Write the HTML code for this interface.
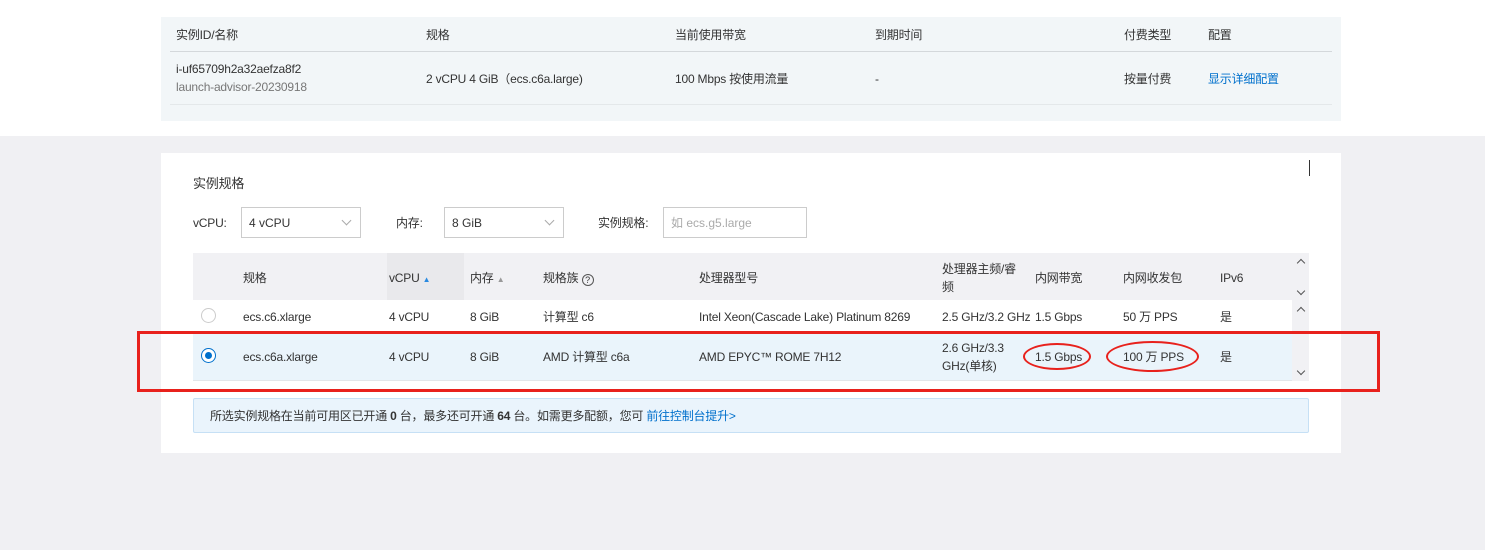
<!DOCTYPE html>
<html><head><meta charset="utf-8"><style>
*{margin:0;padding:0;box-sizing:border-box}
body{width:1485px;height:550px;background:#f0f0f3;font-family:"Liberation Sans","Noto Sans CJK SC",sans-serif;font-size:12px;color:#333;position:relative;overflow:hidden}
.a{position:absolute;white-space:nowrap;line-height:16px;letter-spacing:-0.2px}
.top{position:absolute;left:0;top:0;width:1485px;height:136px;background:#fff}
.tp{position:absolute;left:161px;top:17px;width:1180px;height:104px;background:#f2f6f8}
.card{position:absolute;left:161px;top:153px;width:1180px;height:300px;background:#fff}
.sel{position:absolute;top:207px;height:31px;border:1px solid #ccc;background:#fff;padding:7px 7px;color:#333;line-height:16px}
.chev{position:absolute;right:10px;top:9px;width:7px;height:7px;border-right:1px solid #aaa;border-bottom:1px solid #aaa;transform:rotate(45deg)}
.up,.dn{position:absolute;width:6px;height:6px;border-left:1.5px solid #555;border-top:1.5px solid #555}
.up{transform:rotate(45deg)}.dn{transform:rotate(225deg)}
</style></head><body>
<div class="top"></div>
<div class="tp"></div>
<div class="a" style="left:170px;top:51px;width:1162px;height:1px;background:#d4d8db"></div>
<div class="a" style="left:170px;top:104px;width:1162px;height:1px;background:#e4e8ea"></div>
<div class="a" style="left:176px;top:27px">实例ID/名称</div>
<div class="a" style="left:426px;top:27px">规格</div>
<div class="a" style="left:675px;top:27px">当前使用带宽</div>
<div class="a" style="left:875px;top:27px">到期时间</div>
<div class="a" style="left:1124px;top:27px">付费类型</div>
<div class="a" style="left:1208px;top:27px">配置</div>
<div class="a" style="left:176px;top:61px">i-uf65709h2a32aefza8f2</div>
<div class="a" style="left:176px;top:79px;color:#777">launch-advisor-20230918</div>
<div class="a" style="left:426px;top:71px">2 vCPU 4 GiB（ecs.c6a.large)</div>
<div class="a" style="left:675px;top:71px">100 Mbps 按使用流量</div>
<div class="a" style="left:875px;top:71px">-</div>
<div class="a" style="left:1124px;top:71px">按量付费</div>
<div class="a" style="left:1208px;top:71px;color:#0070cc">显示详细配置</div>

<div class="card"></div>
<div class="a" style="left:1309px;top:160px;width:1px;height:16px;background:#333"></div>
<div class="a" style="left:193px;top:176px;font-size:13px">实例规格</div>
<div class="a" style="left:193px;top:215px">vCPU:</div>
<div class="sel" style="left:241px;width:120px">4 vCPU<div class="chev"></div></div>
<div class="a" style="left:396px;top:215px">内存:</div>
<div class="sel" style="left:444px;width:120px">8 GiB<div class="chev"></div></div>
<div class="a" style="left:598px;top:215px">实例规格:</div>
<div class="sel" style="left:663px;width:144px;color:#aaa">如 ecs.g5.large</div>

<div class="a" style="left:193px;top:253px;width:1116px;height:47px;background:#f1f1f4"></div>
<div class="a" style="left:387px;top:253px;width:77px;height:47px;background:#e9e9ec"></div>
<div class="a" style="left:193px;top:300px;width:1099px;height:33px;background:#fff"></div>
<div class="a" style="left:193px;top:333px;width:1099px;height:47px;background:#eaf4fb"></div>
<div class="a" style="left:193px;top:380px;width:1099px;height:1px;background:#e2e6ea"></div>
<div class="a" style="left:1292px;top:300px;width:17px;height:81px;background:#f1f1f4"></div>
<div class="up" style="left:1298px;top:260px"></div>
<div class="dn" style="left:1298px;top:288px"></div>
<div class="up" style="left:1298px;top:308px"></div>
<div class="dn" style="left:1298px;top:368px"></div>

<div class="a" style="left:243px;top:270px">规格</div>
<div class="a" style="left:389px;top:270px">vCPU <span style="color:#2a8ae0;font-size:8px">▲</span></div>
<div class="a" style="left:470px;top:270px">内存 <span style="color:#999;font-size:8px">▲</span></div>
<div class="a" style="left:543px;top:270px">规格族 <span style="display:inline-block;width:12px;height:12px;border:1px solid #555;border-radius:50%;font-size:9px;text-align:center;line-height:10px;vertical-align:-1px">?</span></div>
<div class="a" style="left:699px;top:270px">处理器型号</div>
<div class="a" style="left:942px;top:261px">处理器主频/睿</div>
<div class="a" style="left:942px;top:279px">频</div>
<div class="a" style="left:1035px;top:270px">内网带宽</div>
<div class="a" style="left:1123px;top:270px">内网收发包</div>
<div class="a" style="left:1220px;top:270px">IPv6</div>

<div class="a" style="left:201px;top:308px;width:15px;height:15px;border:1px solid #ccc;border-radius:50%;background:#fff"></div>
<div class="a" style="left:243px;top:309px">ecs.c6.xlarge</div>
<div class="a" style="left:389px;top:309px">4 vCPU</div>
<div class="a" style="left:470px;top:309px">8 GiB</div>
<div class="a" style="left:543px;top:309px">计算型 c6</div>
<div class="a" style="left:699px;top:309px">Intel Xeon(Cascade Lake) Platinum 8269</div>
<div class="a" style="left:942px;top:309px">2.5 GHz/3.2 GHz</div>
<div class="a" style="left:1035px;top:309px">1.5 Gbps</div>
<div class="a" style="left:1123px;top:309px">50 万 PPS</div>
<div class="a" style="left:1220px;top:309px">是</div>

<div class="a" style="left:201px;top:348px;width:15px;height:15px;border:1px solid #0070cc;border-radius:50%;background:#fff"><div style="position:absolute;left:3px;top:3px;width:7px;height:7px;border-radius:50%;background:#0070cc"></div></div>
<div class="a" style="left:243px;top:349px">ecs.c6a.xlarge</div>
<div class="a" style="left:389px;top:349px">4 vCPU</div>
<div class="a" style="left:470px;top:349px">8 GiB</div>
<div class="a" style="left:543px;top:349px">AMD 计算型 c6a</div>
<div class="a" style="left:699px;top:349px">AMD EPYC™ ROME 7H12</div>
<div class="a" style="left:942px;top:340px">2.6 GHz/3.3</div>
<div class="a" style="left:942px;top:358px">GHz(单核)</div>
<div class="a" style="left:1035px;top:349px">1.5 Gbps</div>
<div class="a" style="left:1123px;top:349px">100 万 PPS</div>
<div class="a" style="left:1220px;top:349px">是</div>

<div class="a" style="left:137px;top:331px;width:1243px;height:61px;border:3px solid #e8211c"></div>
<div class="a" style="left:1023px;top:343px;width:68px;height:27px;border:2px solid #e8211c;border-radius:50%"></div>
<div class="a" style="left:1106px;top:341px;width:93px;height:31px;border:2px solid #e8211c;border-radius:50%"></div>

<div class="a" style="left:193px;top:398px;width:1116px;height:35px;background:#eaf4fc;border:1px solid #c6e0f5;border-radius:2px;padding:9px 16px">所选实例规格在当前可用区已开通 <b>0</b> 台，最多还可开通 <b>64</b> 台。如需更多配额，您可 <span style="color:#0070cc">前往控制台提升&gt;</span></div>
</body></html>
